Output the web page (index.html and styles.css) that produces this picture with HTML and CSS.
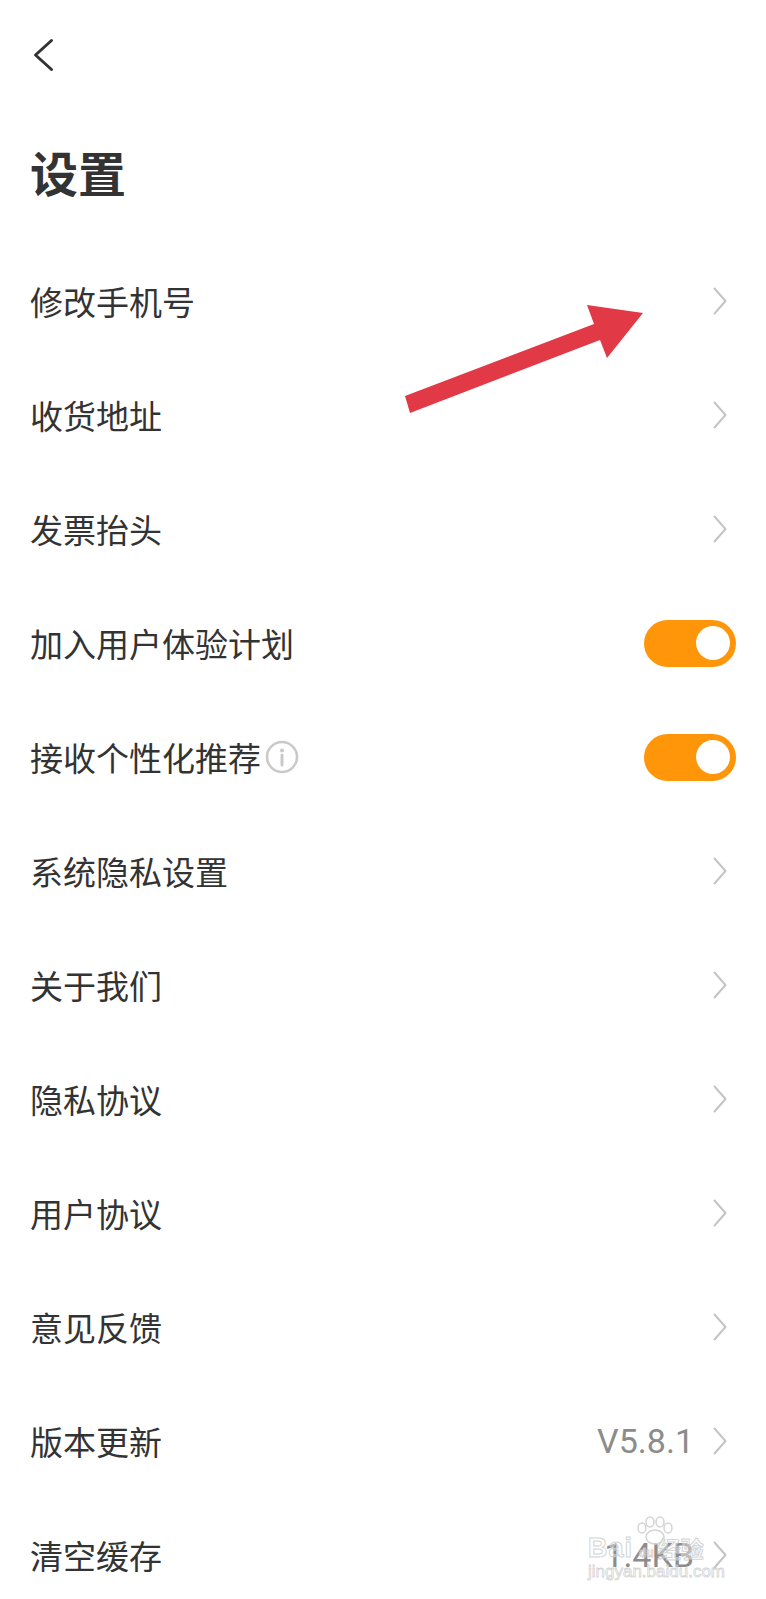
FILE: index.html
```html
<!DOCTYPE html>
<html lang="zh-CN">

<head>
    <meta charset="UTF-8">
    <meta name="viewport" content="width=device-width, initial-scale=1.0">
    <title>设置</title>
    <link rel="stylesheet" href="styles.css">
</head>

<body>
    <header class="topbar">
        <button class="back" aria-label="返回">
            <svg width="24" height="36" viewBox="0 0 24 36">
                <path d="M19.5 3.5 L3.5 18 L19.5 32.5" fill="none" stroke="#333" stroke-width="3" stroke-linecap="round" stroke-linejoin="round" />
            </svg>
        </button>
    </header>

    <h1 class="title">设置</h1>

    <ul class="settings">
        <li class="row">
            <span class="label">修改手机号</span>
            <svg class="chev" width="24" height="30" viewBox="0 0 24 30"><path d="M2.5 2.5 L13.5 15 L2.5 27.5" /></svg>
        </li>
        <li class="row">
            <span class="label">收货地址</span>
            <svg class="chev" width="24" height="30" viewBox="0 0 24 30"><path d="M2.5 2.5 L13.5 15 L2.5 27.5" /></svg>
        </li>
        <li class="row">
            <span class="label">发票抬头</span>
            <svg class="chev" width="24" height="30" viewBox="0 0 24 30"><path d="M2.5 2.5 L13.5 15 L2.5 27.5" /></svg>
        </li>
        <li class="row">
            <span class="label">加入用户体验计划</span>
            <span class="switch on"><span class="knob"></span></span>
        </li>
        <li class="row">
            <span class="label">接收个性化推荐
                <svg class="info" width="34" height="34" viewBox="0 0 34 34">
                    <circle cx="17" cy="17" r="15" fill="none" stroke="#c9c9c9" stroke-width="2.5" />
                    <circle cx="17" cy="10.5" r="2" fill="#c9c9c9" />
                    <path d="M17 15 L17 25" stroke="#c9c9c9" stroke-width="3" stroke-linecap="round" />
                </svg>
            </span>
            <span class="switch on"><span class="knob"></span></span>
        </li>
        <li class="row">
            <span class="label">系统隐私设置</span>
            <svg class="chev" width="24" height="30" viewBox="0 0 24 30"><path d="M2.5 2.5 L13.5 15 L2.5 27.5" /></svg>
        </li>
        <li class="row">
            <span class="label">关于我们</span>
            <svg class="chev" width="24" height="30" viewBox="0 0 24 30"><path d="M2.5 2.5 L13.5 15 L2.5 27.5" /></svg>
        </li>
        <li class="row">
            <span class="label">隐私协议</span>
            <svg class="chev" width="24" height="30" viewBox="0 0 24 30"><path d="M2.5 2.5 L13.5 15 L2.5 27.5" /></svg>
        </li>
        <li class="row">
            <span class="label">用户协议</span>
            <svg class="chev" width="24" height="30" viewBox="0 0 24 30"><path d="M2.5 2.5 L13.5 15 L2.5 27.5" /></svg>
        </li>
        <li class="row">
            <span class="label">意见反馈</span>
            <svg class="chev" width="24" height="30" viewBox="0 0 24 30"><path d="M2.5 2.5 L13.5 15 L2.5 27.5" /></svg>
        </li>
        <li class="row">
            <span class="label">版本更新</span>
            <span class="value">V5.8.1</span>
            <svg class="chev" width="24" height="30" viewBox="0 0 24 30"><path d="M2.5 2.5 L13.5 15 L2.5 27.5" /></svg>
        </li>
        <li class="row">
            <span class="label">清空缓存</span>
            <span class="value">1.4KB</span>
            <svg class="chev" width="24" height="30" viewBox="0 0 24 30"><path d="M2.5 2.5 L13.5 15 L2.5 27.5" /></svg>
        </li>
    </ul>

    <!-- annotation arrow drawn over the screenshot -->
    <svg class="arrow" width="766" height="1599" viewBox="0 0 766 1599">
        <polygon points="405,396 594,324 587,305 643,313 607,358 600,340 410,413" fill="#e13a46" />
    </svg>

    <div class="watermark">
        <svg class="paw" width="46" height="30" viewBox="0 0 46 30">
            <g fill="none" stroke="#d4d4d4" stroke-width="1.5">
                <ellipse cx="23" cy="21" rx="9" ry="7" />
                <ellipse cx="10" cy="12" rx="4" ry="5" />
                <ellipse cx="18" cy="6" rx="4" ry="5" />
                <ellipse cx="28" cy="6" rx="4" ry="5" />
                <ellipse cx="36" cy="12" rx="4" ry="5" />
            </g>
        </svg>
        <div class="wm-line"><span class="wm-bai">Bai</span><span class="wm-du">du</span><span class="wm-jy">经验</span></div>
        <div class="wm-url">jingyan.baidu.com</div>
    </div>
</body>

</html>
```

FILE: styles.css
```css
body {
    margin: 0;
    font-family: "Noto Sans CJK SC", "Noto Sans", sans-serif;
    background-color: #fff;
    color: #333;
    width: 766px;
    position: relative;
    overflow: hidden;
}

.topbar {
    height: 110px;
    display: flex;
    align-items: center;
    padding-left: 32px;
}

.back {
    border: none;
    background: none;
    padding: 0;
    display: flex;
}

.title {
    margin: 37px 0 49px 0;
    padding-left: 30px;
    font-size: 48px;
    line-height: 1;
    font-weight: 700;
    color: #333;
}

.settings {
    list-style-type: none;
    margin: 0;
    padding: 0;
}

.row {
    height: 114px;
    display: flex;
    align-items: center;
    padding: 0 30px;
    font-size: 33px;
}

.label {
    flex-grow: 1;
    display: flex;
    align-items: center;
    color: #333;
}

.info {
    margin-left: 4px;
}

.value {
    font-family: Roboto, "Noto Sans", sans-serif;
    font-size: 34px;
    color: #8c8c8c;
    margin-right: 18px;
}

.chev path {
    fill: none;
    stroke: #c4c4c4;
    stroke-width: 2;
    stroke-linecap: round;
    stroke-linejoin: round;
}

.switch {
    width: 92px;
    height: 47px;
    border-radius: 24px;
    background: #ff9508;
    display: flex;
    align-items: center;
    justify-content: flex-end;
    padding: 0 6px;
    box-sizing: border-box;
}

.knob {
    width: 34px;
    height: 34px;
    border-radius: 50%;
    background: #fff;
}

.arrow {
    position: absolute;
    top: 0;
    left: 0;
    pointer-events: none;
}

.watermark {
    position: absolute;
    left: 588px;
    top: 1516px;
    width: 140px;
    pointer-events: none;
}

.paw {
    display: block;
    margin-left: 44px;
}

.wm-line {
    display: flex;
    align-items: flex-end;
    height: 24px;
    margin-top: -10px;
    font-family: "Liberation Sans", sans-serif;
    font-weight: 700;
    color: rgba(255, 255, 255, 0.4);
    -webkit-text-stroke: 1px rgba(200, 200, 200, 0.8);
}

.wm-bai {
    font-size: 27px;
    line-height: 24px;
    letter-spacing: 1px;
}

.wm-du {
    font-size: 12px;
    line-height: 14px;
    margin: 0 4px 0 6px;
}

.wm-jy {
    font-family: "Noto Sans CJK SC", sans-serif;
    font-size: 23px;
    line-height: 24px;
}

.wm-url {
    font-family: "Liberation Sans", sans-serif;
    font-size: 17px;
    line-height: 20px;
    margin-top: 2px;
    color: rgba(255, 255, 255, 0.4);
    -webkit-text-stroke: 0.8px rgba(200, 200, 200, 0.8);
}
```
